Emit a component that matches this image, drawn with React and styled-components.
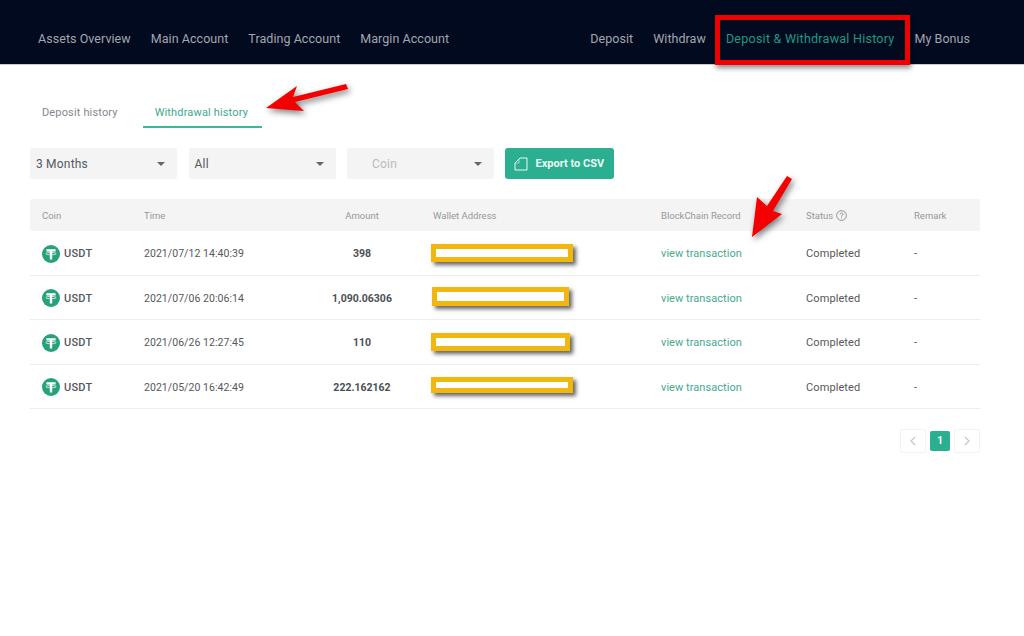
import React from 'react'
import styled, { createGlobalStyle } from 'styled-components'

const GlobalStyle = createGlobalStyle`
  html, body {
    margin: 0;
    padding: 0;
    background: #fff;
    font-family: "Roboto", "Liberation Sans", sans-serif;
  }
  * { box-sizing: border-box; }
`
const Page = styled.div`
  position: relative;
  width: 1024px;
  height: 636px;
  overflow: hidden;
`
const Header = styled.header`
  display: flex;
  align-items: center;
  justify-content: space-between;
  height: 65px;
  padding: 13px 54px 0 38px;
  background: #020a20;
  border-bottom: 1px solid #c9ccd0;
`
const NavGroup = styled.nav`
  display: flex;
  align-items: center;
  gap: 20px;
`
const NavLink = styled.span`
  font-size: 12.5px;
  letter-spacing: ${props => props.active ? '0.25px' : '0.05px'};
  white-space: nowrap;
  color: ${props => props.active ? '#1f9a80' : '#a3a6ae'};
`
const Content = styled.main`
  padding: 35px 44px 0 30px;
`
const Tabs = styled.div`
  display: flex;
  height: 28px;
  padding-left: 12px;
`
const Tab = styled.div`
  font-size: 11px;
  letter-spacing: 0.15px;
  line-height: 26px;
  padding: ${props => props.active ? '0 14px 0 12px' : '0'};
  margin-left: ${props => props.active ? '25px' : '0'};
  color: ${props => props.active ? '#3fa88c' : '#83878d'};
  border-bottom: 2px solid ${props => props.active ? '#3cb898' : 'transparent'};
`
const Filters = styled.div`
  display: flex;
  gap: 11.5px;
  margin-top: 20px;
`
const Select = styled.div`
  display: flex;
  align-items: center;
  justify-content: space-between;
  width: 147px;
  height: 31px;
  padding: 0 12px 0 ${props => props.disabled ? '25px' : '6px'};
  border-radius: 2px;
  background: #f4f4f4;
  font-size: 12px;
  letter-spacing: 0.2px;
  color: ${props => props.disabled ? '#b9bbbd' : '#55585c'};
`
const Caret = styled.i`
  width: 0;
  height: 0;
  border-left: 4px solid transparent;
  border-right: 4px solid transparent;
  border-top: 4px solid #666;
`
const ExportButton = styled.div`
  display: flex;
  align-items: center;
  gap: 8px;
  width: 109px;
  height: 31px;
  margin-left: -1px;
  padding-left: 9px;
  border-radius: 3px;
  background: #2cae90;
  color: #eafaf5;
  font-size: 11px;
  font-weight: 700;
`
const Table = styled.div`
  margin-top: 20px;
`
const GridRow = styled.div`
  display: grid;
  grid-template-columns: 102px 147px 142px 228px 145px 108px 1fr;
  align-items: center;
  padding-left: 12px;
`
const HeadRow = styled(GridRow)`
  height: 32px;
  border-radius: 2px;
  background: #f4f4f4;
  font-size: 9.5px;
  color: #95989c;
`
const BodyRow = styled(GridRow)`
  height: 44.5px;
  padding-top: 2px;
  border-bottom: 1px solid #eceded;
  font-size: 11px;
  letter-spacing: 0.1px;
  color: #55585c;
`
const Centered = styled.div`
  text-align: center;
`
const Amount = styled(Centered)`
  font-size: 10.5px;
  font-weight: 700;
  letter-spacing: 0;
  color: #4c4f53;
`
const TimeCell = styled.div`
  font-size: 10.5px;
  letter-spacing: 0.05px;
`
const CoinCell = styled.div`
  display: flex;
  align-items: center;
  gap: 4px;
  font-weight: 500;
  letter-spacing: 0.25px;
`
const StatusHead = styled.div`
  display: flex;
  align-items: center;
  gap: 3px;
`
const ViewLink = styled.span`
  letter-spacing: 0.05px;
  color: #46a98f;
`
const WalletMask = styled.div`
  width: ${props => props.width}px;
  height: ${props => props.height}px;
  margin-left: ${props => props.left}px;
  margin-top: ${props => props.lift * -2}px;
  border: 5px solid #f2b70e;
  background: #fff;
  box-shadow: 3px 3px 4px rgba(50, 50, 50, 0.75);
`
const Pager = styled.div`
  display: flex;
  justify-content: flex-end;
  align-items: center;
  gap: 4px;
  margin-top: 20px;
`
const PageArrow = styled.div`
  display: flex;
  align-items: center;
  justify-content: center;
  width: 26px;
  height: 24px;
  border: 1px solid #f1f2f2;
  border-radius: 2px;
`
const PageNumber = styled.div`
  width: 20px;
  height: 20px;
  border-radius: 2px;
  background: #2cae90;
  color: #fff;
  font-size: 10px;
  font-weight: 700;
  line-height: 20px;
  text-align: center;
`
const RedBox = styled.div`
  position: absolute;
  left: 715px;
  top: 15px;
  width: 195px;
  height: 50px;
  border: 5px solid #f00000;
  box-shadow: 1px 3px 5px rgba(0, 0, 0, 0.45);
`
const ArrowSvg = styled.svg`
  position: absolute;
  left: 0;
  top: 0;
  pointer-events: none;
  filter: drop-shadow(2px 3px 3px rgba(0, 0, 0, 0.5));
`

const TetherIcon = () => (
  <svg width="18" height="18" viewBox="0 0 18 18">
    <circle cx="9" cy="9" r="9" fill="#26a17b" />
    <path d="M4.4 4.2h9.2v2.4h-3.4v8H7.8v-8H4.4z" fill="#fff" />
    <ellipse cx="9" cy="8.6" rx="5.2" ry="1.2" fill="none" stroke="#fff" strokeWidth="0.7" />
  </svg>
)

const ExportIcon = () => (
  <svg width="14" height="14" viewBox="0 0 14 14" fill="none" stroke="#eafaf5" strokeWidth="1">
    <path d="M1 6 6 1h7v12H1z" />
    <path d="M5 2v4H1.5" strokeWidth="0.6" />
  </svg>
)

const HelpIcon = () => (
  <svg width="11" height="11" viewBox="0 0 12 12" fill="none" stroke="#7d8084" strokeWidth="0.9">
    <circle cx="6" cy="6" r="5.3" />
    <path d="M4.4 4.8c0-2.1 3.2-2.1 3.2-.1 0 1.2-1.6 1.2-1.6 2.6" />
    <path d="M6 8.2v1" />
  </svg>
)

const Chevron = ({ direction }) => (
  <svg width="8" height="10" viewBox="0 0 8 10" fill="none" stroke="#c4c6c8" strokeWidth="1.2">
    <path d={direction === 'left' ? 'M6 1 2 5l4 4' : 'M2 1l4 4-4 4'} />
  </svg>
)

const rows = [
  { time: '2021/07/12 14:40:39', amount: '398', mask: { width: 142, height: 18, left: -2, lift: 0.5 } },
  { time: '2021/07/06 20:06:14', amount: '1,090.06306', mask: { width: 137, height: 19, left: -1, lift: 2 } },
  { time: '2021/06/26 12:27:45', amount: '110', mask: { width: 139, height: 18, left: -2, lift: 0.5 } },
  { time: '2021/05/20 16:42:49', amount: '222.162162', mask: { width: 142, height: 16, left: -2, lift: 2.5 } },
]

export default function App() {
  return (
    <Page>
      <GlobalStyle />
      <Header>
        <NavGroup>
          <NavLink>Assets Overview</NavLink>
          <NavLink>Main Account</NavLink>
          <NavLink>Trading Account</NavLink>
          <NavLink>Margin Account</NavLink>
        </NavGroup>
        <NavGroup>
          <NavLink>Deposit</NavLink>
          <NavLink>Withdraw</NavLink>
          <NavLink active>Deposit &amp; Withdrawal History</NavLink>
          <NavLink>My Bonus</NavLink>
        </NavGroup>
      </Header>
      <Content>
        <Tabs>
          <Tab>Deposit history</Tab>
          <Tab active>Withdrawal history</Tab>
        </Tabs>
        <Filters>
          <Select>3 Months<Caret /></Select>
          <Select>All<Caret /></Select>
          <Select disabled>Coin<Caret /></Select>
          <ExportButton><ExportIcon />Export to CSV</ExportButton>
        </Filters>
        <Table>
          <HeadRow>
            <div>Coin</div>
            <div>Time</div>
            <Centered>Amount</Centered>
            <div>Wallet Address</div>
            <div>BlockChain Record</div>
            <StatusHead>Status <HelpIcon /></StatusHead>
            <div>Remark</div>
          </HeadRow>
          {rows.map(row => (
            <BodyRow key={row.time}>
              <CoinCell><TetherIcon />USDT</CoinCell>
              <TimeCell>{row.time}</TimeCell>
              <Amount>{row.amount}</Amount>
              <WalletMask {...row.mask} />
              <ViewLink>view transaction</ViewLink>
              <div>Completed</div>
              <div>-</div>
            </BodyRow>
          ))}
        </Table>
        <Pager>
          <PageArrow><Chevron direction="left" /></PageArrow>
          <PageNumber>1</PageNumber>
          <PageArrow><Chevron direction="right" /></PageArrow>
        </Pager>
      </Content>
      <RedBox />
      <ArrowSvg width="1024" height="636" viewBox="0 0 1024 636">
        <path d="M266 108 297 86 293 97 346 84 348 89 295 102 304 111z" fill="#f50000" />
        <path d="M752 237 757 197 767 206 787 176 792 179 773 211 782 214z" fill="#f50000" />
      </ArrowSvg>
    </Page>
  )
}
